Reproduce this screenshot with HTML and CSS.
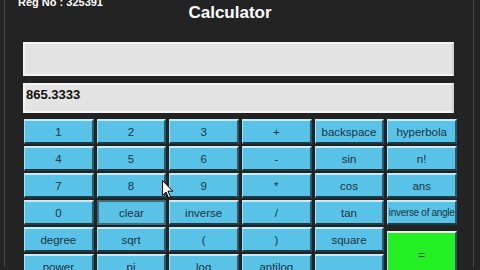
FILE: index.html
```html
<!DOCTYPE html>
<html lang="en">
<head>
  <meta charset="UTF-8" />
  <meta name="viewport" content="width=device-width, initial-scale=1.0"/>
  <title>Calculator</title>
  <link rel="stylesheet" href="styles.css">
</head>
<body>
  <div class="frame">
    <div class="reg">Reg No : 325391</div>
    <h1 class="title">Calculator</h1>
    <div class="display"></div>
    <div class="display result">865.3333</div>

    <div class="keys">
      <button>1</button>
      <button>2</button>
      <button>3</button>
      <button>+</button>
      <button>backspace</button>
      <button>hyperbola</button>

      <button>4</button>
      <button>5</button>
      <button>6</button>
      <button>-</button>
      <button>sin</button>
      <button>n!</button>

      <button>7</button>
      <button>8</button>
      <button>9</button>
      <button>*</button>
      <button>cos</button>
      <button>ans</button>

      <button>0</button>
      <button class="focused">clear</button>
      <button>inverse</button>
      <button>/</button>
      <button>tan</button>
      <button class="small">inverse of angle</button>

      <button>degree</button>
      <button>sqrt</button>
      <button>(</button>
      <button>)</button>
      <button>square</button>
      <button class="equals">=</button>

      <button>power</button>
      <button>pi</button>
      <button>log</button>
      <button>antilog</button>
      <button></button>
    </div>
  </div>

  <svg class="cursor" width="12" height="19" viewBox="0 0 12 19">
    <path d="M0.5 0.5 L0.5 15.5 L4 12 L6.5 18 L8.5 17 L6 11.2 L10.8 11.2 Z" fill="#fff" stroke="#000" stroke-width="1"/>
  </svg>
</body>
</html>
```

FILE: styles.css
```css
* {
  box-sizing: border-box;
  font-family: 'Liberation Sans', Arial, sans-serif;
}

body {
  margin: 0;
  background: #232323;
  height: 270px;
  overflow: hidden;
}

.frame {
  margin: 0 6px 0 4px;
  height: 270px;
  padding: 0 16px 0 18px;
  border-left: 1px solid #4a4a4a;
  border-right: 1px solid #4a4a4a;
}

.reg {
  color: #fff;
  font-size: 11px;
  font-weight: bold;
  line-height: 11px;
  margin-top: -3px;
  margin-left: -5px;
  height: 10px;
}

.title {
  color: #fff;
  font-size: 17px;
  font-weight: bold;
  line-height: 20px;
  margin: -4px 0 0;
  padding-right: 20px;
  text-align: center;
}

.display {
  height: 34px;
  margin-top: 19px;
  margin-right: 3px;
  background: #e3e3e3;
  border: 2px solid #f4f4f4;
  border-right-color: #cfcfcf;
}

.result {
  height: 30px;
  margin-top: 7px;
  padding: 2px 1px;
  font-size: 13px;
  font-weight: bold;
  color: #111;
}

.keys {
  display: grid;
  grid-template-columns: repeat(6, 1fr);
  grid-auto-rows: 25px;
  column-gap: 3px;
  row-gap: 2px;
  margin-top: 6px;
  margin-left: 1px;
}

.keys button {
  background: #59c3e7;
  color: #1b3440;
  font-size: 11.5px;
  padding: 0;
  border-top: 2px solid #c6ecf8;
  border-left: 1px solid #a8dff2;
  border-bottom: 2px solid #1c3a45;
  border-right: 2px solid #2c5766;
  overflow: hidden;
  white-space: nowrap;
}

.keys .focused {
  border: 2px solid #3b6a7a;
}

.keys .small {
  font-size: 10px;
  letter-spacing: -0.3px;
}

.keys .equals {
  grid-row: span 2;
  background: #22f022;
  border-top-color: #e8f8e8;
  margin-top: 4px;
}

.cursor {
  position: absolute;
  left: 162px;
  top: 180px;
}
```
